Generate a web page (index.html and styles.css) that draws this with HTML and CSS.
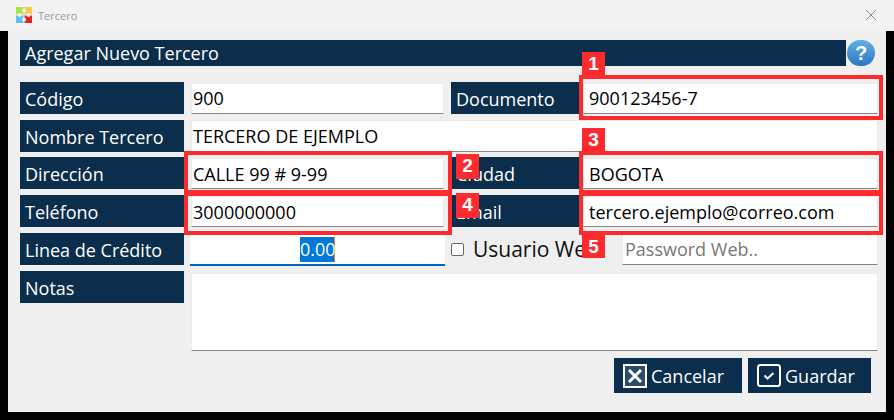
FILE: index.html
```html
<!DOCTYPE html>
<html lang="es">
<head>
<meta charset="utf-8">
<title>Tercero</title>
<link rel="stylesheet" href="styles.css">
</head>
<body>
<div class="window">
  <div class="titlebar">
    <svg class="logo" viewBox="0 0 16 16" width="16" height="16">
      <rect x="0" y="0" width="7.5" height="7.5" fill="#a6e83c"/>
      <rect x="8.5" y="0" width="7.5" height="7.5" fill="#fcc74f"/>
      <rect x="0" y="8.5" width="7.5" height="7.5" fill="#5dc1ef"/>
      <rect x="8.5" y="8.5" width="7.5" height="7.5" fill="#e1252c"/>
      <circle cx="8" cy="3.5" r="2" fill="#f3f3f3"/>
      <circle cx="12.5" cy="8" r="2" fill="#f3f3f3"/>
      <circle cx="8" cy="12.5" r="2" fill="#f3f3f3"/>
      <circle cx="3.5" cy="8" r="2" fill="#f3f3f3"/>
    </svg>
    <span class="title">Tercero</span>
    <svg class="close" viewBox="0 0 10 10" width="10" height="10"><path d="M0 0L10 10M10 0L0 10" stroke="#8c8c8c" stroke-width="1" fill="none"/></svg>
  </div>
  <div class="client">
    <div class="heading">
      <div class="heading-bar">Agregar Nuevo Tercero</div>
      <div class="help">?</div>
    </div>
    <div class="form">
      <div class="label">Código</div>
      <div class="field">900</div>
      <div class="label">Documento</div>
      <div class="field field-right">900123456-7</div>

      <div class="label">Nombre Tercero</div>
      <div class="field field-wide">TERCERO DE EJEMPLO</div>

      <div class="label">Dirección</div>
      <div class="field field-low">CALLE 99 # 9-99</div>
      <div class="label">Ciudad</div>
      <div class="field field-right field-low">BOGOTA</div>

      <div class="label">Teléfono</div>
      <div class="field field-low">3000000000</div>
      <div class="label">Email</div>
      <div class="field field-right field-low">tercero.ejemplo@correo.com</div>

      <div class="label">Linea de Crédito</div>
      <div class="field field-focus"><span class="selected">0.00</span></div>
      <label class="web-user"><input class="check" type="checkbox">Usuario Web</label>
      <div class="field field-password">Password Web..</div>

      <div class="label">Notas</div>
      <div class="field field-notes"></div>
    </div>
    <div class="actions">
      <div class="button button-cancel">
        <svg viewBox="0 0 24 24" width="24" height="24">
          <rect x="1" y="1" width="22" height="22" fill="#2c4c69" stroke="#fff" stroke-width="2"/>
          <path d="M6 6L18 18M18 6L6 18" stroke="#fff" stroke-width="3" fill="none"/>
        </svg>
        Cancelar
      </div>
      <div class="button button-save">
        <svg viewBox="0 0 24 23" width="24" height="23">
          <rect x="1" y="1" width="22" height="21" rx="2.5" fill="none" stroke="#fff" stroke-width="2"/>
          <path d="M7.5 11.5L10.5 14.5L16.5 9" stroke="#fff" stroke-width="2" fill="none"/>
        </svg>
        Guardar
      </div>
    </div>
  </div>

  <div class="frame frame-1"></div>
  <div class="frame frame-2"></div>
  <div class="frame frame-4"></div>
  <div class="frame frame-3"></div>
  <div class="frame frame-5"></div>
  <div class="badge badge-1">1</div>
  <div class="badge badge-2">2</div>
  <div class="badge badge-3">3</div>
  <div class="badge badge-4">4</div>
  <div class="badge badge-5">5</div>
</div>
</body>
</html>
```

FILE: styles.css
```css
* { box-sizing: border-box; }
html, body { margin: 0; padding: 0; background: #000; }
body { font-family: "Open Sans", "Noto Sans", sans-serif; }
.window { position: relative; width: 894px; height: 420px; background: #000; overflow: hidden; }

.titlebar { display: flex; align-items: center; height: 31px; padding: 0 18px 1px 16px; background: #f3f3f3; }
.logo { flex: none; }
.title { margin-left: 6px; font-size: 11px; color: #9a9a9a; }
.close { margin-left: auto; }

.client { display: flex; flex-direction: column; height: 381px; margin: 0 8px; padding: 9px 11px 0 12px; background: #efefef; }

.heading { display: flex; gap: 1px; height: 26px; }
.heading-bar { width: 827px; padding-left: 5px; background: #0a2e4b; color: #fff; font-size: 18px; line-height: 27px; }
.help { width: 28px; height: 26px; border-radius: 13px; background: linear-gradient(#62afe8, #2a77c0); color: #fff; font: bold 20px/26px "Liberation Sans", sans-serif; text-align: center; }

.form { display: grid; grid-template-columns: 164px 253px 128px 292px; grid-template-rows: 32px 31px 32px 32px 32px 80px; column-gap: 7px; row-gap: 6px; margin-top: 16px; }

.label { height: 32px; padding-left: 5px; background: #0a2e4b; color: #fff; font-size: 18px; line-height: 34px; white-space: nowrap; }
.field { height: 31px; margin-top: 1px; padding-left: 1px; background: #fff; border: 1px solid #ebebeb; border-bottom: 1px solid #858585; color: #000; font-size: 18px; line-height: 28px; white-space: nowrap; }
.field-low { line-height: 30px; }
.form > .field-right { margin-left: -3px; padding-left: 5px; }
.form > .field-wide { grid-column: 2 / 5; height: 32px; margin: 0; line-height: 30px; }

.form > .field-focus { height: 33px; margin: 0 -1px; border: 0; border-bottom: 2px solid #0067c0; padding: 4px 0 0 110px; line-height: 25px; }
.selected { display: inline-block; width: 35px; height: 25px; background: #0078d7; color: #fff; text-align: center; border-right: 1px solid #e08020; }

.web-user { display: flex; align-items: center; color: #111; font-size: 21px; white-space: nowrap; line-height: 34px; }
.check { flex: none; appearance: none; width: 13px; height: 13px; margin: 0 9px 0 0; border: 1px solid #666; border-radius: 2px; background: #fff; }
.form > .field-password { margin-left: 36px; padding-left: 2px; color: #777; }
.form > .field-notes { grid-column: 2 / 5; height: 78px; margin: 2px 0 0; }

.actions { display: flex; justify-content: flex-end; gap: 6px; margin-top: 7px; padding-right: 4px; }
.button { display: flex; align-items: center; gap: 4px; height: 35px; background: #0a2e4b; color: #fff; font-size: 18px; }
.button-cancel { width: 128px; padding-left: 9px; }
.button-save { width: 123px; padding-left: 9px; }

.frame { position: absolute; border: 4px solid #fe2b2e; }
.frame-1 { left: 579px; top: 75px; width: 304px; height: 45px; }
.frame-2 { left: 184px; top: 151px; width: 268px; height: 43px; }
.frame-4 { left: 184px; top: 192px; width: 268px; height: 43px; }
.frame-3 { left: 579px; top: 151px; width: 304px; height: 43px; }
.frame-5 { left: 579px; top: 192px; width: 304px; height: 43px; }

.badge { position: absolute; width: 23px; height: 24px; background: #fe2b2e; color: #fff; font: bold 19px/24px "Liberation Sans", sans-serif; text-align: center; }
.badge-1 { left: 582px; top: 52px; }
.badge-2 { left: 456px; top: 154px; height: 25px; }
.badge-3 { left: 582px; top: 128px; }
.badge-4 { left: 456px; top: 193px; height: 25px; }
.badge-5 { left: 582px; top: 235px; height: 23px; }
```
